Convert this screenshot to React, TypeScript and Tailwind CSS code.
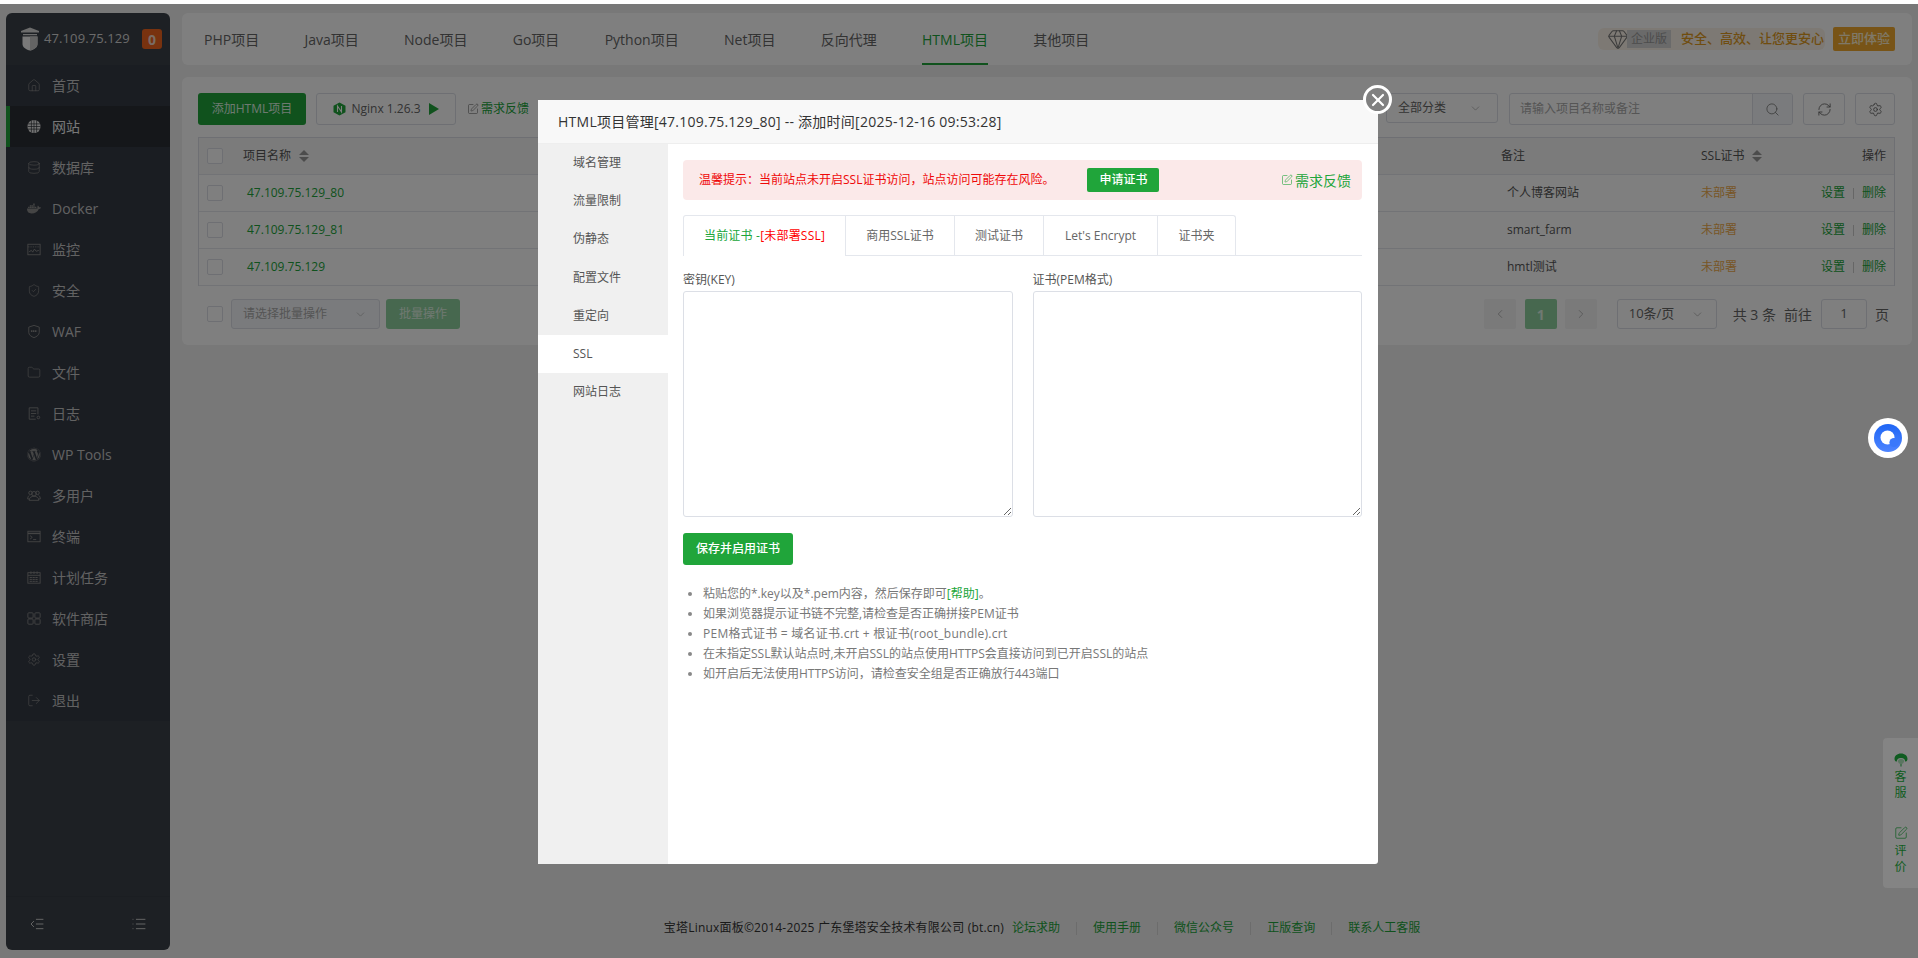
import React from "react";
import {
  House, Database, ShieldCheck, Folder, Settings, LogOut, ChevronDown, ChevronLeft, ChevronRight, Search, RefreshCw, Gem, SquarePen, IndentDecrease, List, X,
} from "lucide-react";
import { FaWordpress, FaDocker } from "react-icons/fa";

function I({ children }: { children: React.ReactNode }) {
  return (
    <svg width="15" height="15" viewBox="0 0 16 16" fill="none" stroke="currentColor" strokeWidth="1">
      {children}
    </svg>
  );
}

const navItems: [string, React.ReactNode][] = [
  ["首页", <House size={15} strokeWidth={1.2} />],
  ["网站", (
    <svg width="15" height="15" viewBox="0 0 16 16">
      <circle cx="8" cy="8" r="7.5" fill="currentColor" />
      <path d="M5 1 V15 M8 0.5 V15.5 M11 1 V15 M1 5 H15 M0.5 8 H15.5 M1 11 H15" stroke="#2a2e34" strokeWidth="0.8" />
    </svg>
  )],
  ["数据库", <Database size={15} strokeWidth={1.2} />],
  ["Docker", <FaDocker size={15} />],
  ["监控", (
    <I>
      <rect x="1" y="2" width="14" height="12" />
      <path d="M1 5 H15" strokeDasharray="1 1" />
      <path d="M2.5 10.5 L5 9 L6.5 11 L8.5 7.5 L10.5 10 L13.5 9" />
    </I>
  )],
  ["安全", <ShieldCheck size={15} strokeWidth={1.2} />],
  ["WAF", (
    <I>
      <path d="M8 1 L14 3 V9 C14 12 11 14 8 15 C5 14 2 12 2 9 V3 Z" />
      <path d="M4.5 7.5 H11.5" strokeWidth="2" strokeDasharray="1.6 0.6" />
    </I>
  )],
  ["文件", <Folder size={15} strokeWidth={1.2} />],
  ["日志", (
    <I>
      <path d="M12.5 9 V1.5 H2.5 V14.5 H10" />
      <path d="M4.5 5 H10.5 M4.5 8 H10.5 M4.5 11 H8.5" />
      <circle cx="13" cy="12.5" r="1.5" />
    </I>
  )],
  ["WP Tools", <FaWordpress size={15} />],
  ["多用户", (
    <I>
      <circle cx="8" cy="6" r="2.6" />
      <circle cx="4" cy="5" r="2" />
      <circle cx="12" cy="5" r="2" />
      <path d="M2.5 13.5 C2.5 10.5 5 8.8 8 8.8 C11 8.8 13.5 10.5 13.5 13.5 Z" />
      <path d="M2.5 8 C1.2 9 0.8 10.5 0.8 12 H2.5 M13.5 8 C14.8 9 15.2 10.5 15.2 12 H13.5" />
    </I>
  )],
  ["终端", (
    <I>
      <rect x="1" y="2" width="14" height="12" />
      <path d="M1 4.5 H15" strokeWidth="1.6" />
      <path d="M3.5 7 L6 9 L3.5 11 M7 11.5 H10.5" />
    </I>
  )],
  ["计划任务", (
    <I>
      <rect x="1" y="2.5" width="14" height="12" />
      <path d="M4.5 1 V4 M8 1 V4 M11.5 1 V4 M1 5.5 H15" />
      <path d="M3 8 H13 M3 10.2 H13 M3 12.4 H13" strokeWidth="1.1" strokeDasharray="2.6 0.7" />
    </I>
  )],
  ["软件商店", (
    <I>
      <rect x="1" y="1.5" width="6" height="6" rx="1" />
      <rect x="9" y="1.5" width="6" height="6" rx="1" />
      <rect x="1" y="8.5" width="6" height="6" rx="1" />
      <rect x="9" y="8.5" width="6" height="6" rx="1" />
    </I>
  )],
  ["设置", <Settings size={15} strokeWidth={1.2} />],
  ["退出", <LogOut size={15} strokeWidth={1.2} />],
];

const topTabs = ["PHP项目", "Java项目", "Node项目", "Go项目", "Python项目", "Net项目", "反向代理", "HTML项目", "其他项目"];
const rows = [
  ["47.109.75.129_80", "个人博客网站"],
  ["47.109.75.129_81", "smart_farm"],
  ["47.109.75.129", "hmtl测试"],
];
const modalNav = ["域名管理", "流量限制", "伪静态", "配置文件", "重定向", "SSL", "网站日志"];
const sslTabs = [
  ["商用SSL证书", "w-[109px]"],
  ["测试证书", "w-[89px]"],
  ["Let's Encrypt", "w-[114px]"],
  ["证书夹", "w-[78px]"],
];
const footerLinks = ["论坛求助", "使用手册", "微信公众号", "正版查询", "联系人工客服"];

function Check() {
  return <span className="block h-4 w-4 shrink-0 rounded-[2px] border border-[#dcdfe6] bg-white" />;
}

function Sort() {
  return (
    <span className="ml-2 flex flex-col gap-[2px]">
      <span className="h-0 w-0 border-x-[5px] border-b-[5px] border-x-transparent border-b-[#999]" />
      <span className="h-0 w-0 border-x-[5px] border-t-[5px] border-x-transparent border-t-[#999]" />
    </span>
  );
}

function Logo() {
  return (
    <svg width="20" height="24" viewBox="0 0 20 24" className="shrink-0">
      <path d="M1 4 L10 0.5 L19 4 L19 5.5 L1 5.5 Z" fill="#d9d9d9" />
      <path d="M3 7 H17 V8.2 H3 Z" fill="#d9d9d9" />
      <path d="M2.5 9.5 H17.5 V17 C17.5 20.5 13.5 22.8 10 23.5 C6.5 22.8 2.5 20.5 2.5 17 Z" fill="#f2f2f2" />
      <path d="M10 9.5 H17.5 V17 C17.5 20.5 13.5 22.8 10 23.5 Z" fill="#c9c9c9" />
    </svg>
  );
}

export default function App() {
  return (
    <div className="h-[958px] w-[1918px] overflow-hidden bg-white text-[12px] text-[#333] [font-family:'Open_Sans','Noto_Sans_CJK_SC',sans-serif]">
      <div className="h-1 bg-white" />
      <div className="relative flex h-[954px] bg-[#f0f0f0] pb-2 pl-[6px] pr-[6px] pt-[9px]">
        {/* sidebar */}
        <aside className="flex w-[164px] shrink-0 flex-col overflow-hidden rounded-[6px] bg-[#3a4048]">
          <div className="flex h-[52px] shrink-0 items-center pl-[14px] pr-2 text-[#d6d6d6]">
            <Logo />
            <span className="ml-[4px] text-[13px] tracking-[0.1px]">47.109.75.129</span>
            <span className="ml-auto flex h-5 w-5 items-center justify-center rounded-[3px] bg-[#f0641e] text-[14px] font-bold text-[#f5d8c8]">0</span>
          </div>
          <nav className="flex flex-col bg-[#343a44]">
            {navItems.map(([label, icon], i) => (
              <div
                key={label}
                className={`flex h-[41px] items-center border-l-4 pl-[17px] text-[14px] ${
                  i === 1 ? "border-[#20a53a] bg-[#2a2e34] text-[#eeeeee]" : "border-transparent text-[#c4c4c4]"
                }`}
              >
                <span className={`flex w-[14px] justify-center ${i === 1 ? "text-[#e6e6e6]" : "text-[#8a8a8a]"}`}>{icon}</span>
                <span className="ml-[11px]">{label}</span>
              </div>
            ))}
          </nav>
          <div className="flex-1" />
          <div className="flex h-[54px] shrink-0 items-center justify-between border-t border-[#363c44] pl-[23px] pr-[23px] text-[#c8c8c8]">
            <IndentDecrease size={16} strokeWidth={1.5} />
            <List size={16} strokeWidth={1.5} />
          </div>
        </aside>

        {/* main column */}
        <main className="ml-3 flex min-w-0 flex-1 flex-col">
          <div className="flex h-[52px] shrink-0 items-center rounded-[6px] bg-white pl-[22px] pr-[16px] text-[14px] text-[#666]">
            {topTabs.map((t, i) => (
              <div
                key={t}
                className={`mr-[45.3px] flex h-full items-center border-b-2 pt-[2px] ${
                  i === 7 ? "border-[#20a53a] text-[#20a53a]" : "border-transparent"
                }`}
              >
                {t}
              </div>
            ))}
            <div className="ml-auto flex h-[22px] w-[227px] items-center rounded-[6px] bg-[#fbf3e8] pl-[9px]">
              <Gem size={22} strokeWidth={1.1} className="shrink-0 text-[#777]" />
              <span className="-ml-[2px] flex h-[18px] w-[44px] items-center justify-center bg-[#d4d4d4] text-[12px] text-[#999]">企业版</span>
              <span className="ml-[10px] text-[13px] font-medium text-[#e09a1f]">安全、高效、让您更安心</span>
            </div>
            <span className="ml-2 mr-[1px] flex h-6 w-[62px] items-center justify-center rounded-[2px] bg-[#f0a92e] text-[13px] font-medium text-[#fff1d0]">立即体验</span>
          </div>

          <section className="mt-3 h-[268px] shrink-0 rounded-[6px] bg-white pl-4 pr-[17px] pt-4">
            <div className="flex h-8 items-start">
              <span className="flex h-8 w-[108px] items-center justify-center rounded-[3px] bg-[#20a53a] text-[12px] text-[#dff3e3]">添加HTML项目</span>
              <span className="ml-[10px] flex h-8 w-[140px] items-center justify-center rounded-[3px] border border-[#dcdfe6] text-[12px] text-[#666]">
                <svg width="13" height="14" viewBox="0 0 13 14" className="mr-[5px]">
                  <path d="M6.5 0.5 L12.5 3.7 V10.3 L6.5 13.5 L0.5 10.3 V3.7 Z" fill="#20a53a" />
                  <path d="M4.5 10 V4 L8.5 10 V4" stroke="#fff" strokeWidth="1.1" fill="none" />
                </svg>
                Nginx 1.26.3
                <span className="ml-2 h-0 w-0 border-y-[6px] border-l-[10px] border-y-transparent border-l-[#20a53a]" />
              </span>
              <span className="ml-[11px] flex h-8 items-center text-[12px] text-[#20a53a]">
                <SquarePen size={12} strokeWidth={1.2} className="mr-[2px] text-[#666]" />
                需求反馈
              </span>
              <span className="ml-auto flex h-[30px] w-[112px] items-center justify-between rounded-[3px] border border-[#dcdfe6] pl-[11px] pr-[15px] text-[12px] text-[#666]">
                全部分类 <ChevronDown size={13} strokeWidth={1.2} className="text-[#999]" />
              </span>
              <span className="ml-[11px] flex h-8 w-[284px] items-stretch overflow-hidden rounded-[3px] border border-[#dcdfe6] text-[12px] text-[#aaa]">
                <span className="flex flex-1 items-center pl-[10px]">请输入项目名称或备注</span>
                <span className="flex w-[40px] items-center justify-center border-l border-[#dcdfe6] bg-[#f5f7fa] text-[#777]">
                  <Search size={15} strokeWidth={1.3} />
                </span>
              </span>
              <span className="ml-[10px] flex h-8 w-[42px] items-center justify-center rounded-[3px] border border-[#dcdfe6] text-[#666]">
                <RefreshCw size={15} strokeWidth={1.4} />
              </span>
              <span className="ml-[10px] flex h-8 w-[40px] items-center justify-center rounded-[3px] border border-[#dcdfe6] text-[#666]">
                <Settings size={15} strokeWidth={1.4} />
              </span>
            </div>

            <div className="mt-3 border-x border-t border-[#dcdfe6] text-[12px]">
              <div className="flex h-[37px] items-center border-b border-[#e4e7ed] bg-[#f7f7f7] text-[#555]">
                <span className="ml-2"><Check /></span>
                <span className="ml-5 flex w-[1258px] items-center">项目名称<Sort /></span>
                <span className="w-[200px]">备注</span>
                <span className="flex items-center">SSL证书<Sort /></span>
                <span className="ml-auto mr-2">操作</span>
              </div>
              {rows.map(([name, note]) => (
                <div key={name} className="flex h-[37px] items-center border-b border-[#e4e7ed] text-[#555]">
                  <span className="ml-2"><Check /></span>
                  <span className="ml-6 w-[1254px] text-[#20a53a]">{name}</span>
                  <span className="ml-[6px] w-[194px]">{note}</span>
                  <span className="text-[#f0ad4e]">未部署</span>
                  <span className="ml-auto mr-2 flex items-center text-[#20a53a]">
                    设置<span className="mx-2 h-[11px] w-px bg-[#ccc]" />删除
                  </span>
                </div>
              ))}
            </div>

            <div className="mt-[13px] flex h-[30px] items-center text-[12px] text-[#666]">
              <span className="ml-[9px]"><Check /></span>
              <span className="ml-2 flex h-[30px] w-[149px] items-center justify-between rounded-[3px] border border-[#dcdfe6] bg-[#f5f7fa] pl-[11px] pr-[12px] text-[#aaa]">
                请选择批量操作 <ChevronDown size={13} strokeWidth={1.2} />
              </span>
              <span className="ml-[6px] flex h-[30px] w-[74px] items-center justify-center rounded-[3px] bg-[#8fd19e] text-[#e0f2e4]">批量操作</span>
              <span className="ml-auto flex h-[30px] w-8 items-center justify-center rounded-[2px] bg-[#f4f4f5] text-[#aaa]"><ChevronLeft size={14} strokeWidth={1.4} /></span>
              <span className="ml-[9px] flex h-[30px] w-8 items-center justify-center rounded-[2px] bg-[#8fd19e] text-[14px] font-bold text-[#e0f2e4]">1</span>
              <span className="ml-2 flex h-[30px] w-8 items-center justify-center rounded-[2px] bg-[#f4f4f5] text-[#aaa]"><ChevronRight size={14} strokeWidth={1.4} /></span>
              <span className="ml-5 flex h-[30px] w-[100px] items-center justify-between rounded-[3px] border border-[#dcdfe6] pl-[11px] pr-[12px] text-[13px]">
                10条/页 <ChevronDown size={13} strokeWidth={1.2} className="text-[#999]" />
              </span>
              <span className="ml-4 text-[14px]">共 3 条</span>
              <span className="ml-[8px] text-[14px]">前往</span>
              <span className="ml-[9px] flex h-[30px] w-[46px] items-center justify-center rounded-[3px] border border-[#dcdfe6] text-[13px]">1</span>
              <span className="ml-2 mr-[6px] text-[14px]">页</span>
            </div>
          </section>

          <footer className="mt-auto flex h-[44px] items-center justify-center pr-[10px] text-[12px] text-[#333]">
            <span className="tracking-[0.2px]">宝塔Linux面板©2014-2025 广东堡塔安全技术有限公司 (bt.cn)</span>
            {footerLinks.map((l, i) => (
              <span key={l} className={`flex items-center text-[#20a53a] ${i === 0 ? "ml-2" : ""}`}>
                {i > 0 && <span className="mx-4 h-[13px] w-px bg-[#d8d8d8]" />}
                {l}
              </span>
            ))}
          </footer>
        </main>

        {/* dim layer */}
        <div className="absolute inset-0 bg-black/50" />

        {/* right side widgets */}
        <div className="absolute left-[1868px] top-[414px] flex h-10 w-10 items-center justify-center rounded-full bg-white">
          <svg width="28" height="28" viewBox="0 0 28 28">
            <defs>
              <linearGradient id="chatBlue" x1="0" y1="0" x2="0" y2="1">
                <stop offset="0" stopColor="#1f66f5" />
                <stop offset="1" stopColor="#4d84ff" />
              </linearGradient>
            </defs>
            <circle cx="14" cy="14" r="14" fill="url(#chatBlue)" />
            <circle cx="13.5" cy="13.5" r="7" fill="#ffffff" />
            <circle cx="20" cy="18.5" r="4.6" fill="#3a78fb" />
          </svg>
        </div>
        <div className="absolute left-[1883px] top-[734px] flex h-[150px] w-[35px] flex-col items-center rounded-l-[4px] bg-[#848484] pt-[15px] text-[12px] leading-[16px] text-[#0f5c20]">
          <svg width="14" height="14" viewBox="0 0 14 14">
            <path d="M7 0.5 C3.2 0.5 0.5 2.8 0.5 6 C0.5 7.6 1.6 8.6 2.8 8.6 C2.8 6.5 4 5 7 5 C10 5 11.2 6.5 11.2 8.6 C12.4 8.6 13.5 7.6 13.5 6 C13.5 2.8 10.8 0.5 7 0.5 Z" fill="#0f5c20" />
            <path d="M3.8 8 C4.5 10.5 5.5 11 7 11 C8.5 11 9.5 10.5 10.2 8 C9.6 6.5 8.5 6 7 6 C5.5 6 4.4 6.5 3.8 8 Z" fill="#0f5c20" opacity="0.35" />
            <path d="M7 11 V13.5" stroke="#0f5c20" strokeWidth="1" />
          </svg>
          <span className="mt-[2px] w-3 text-center">客服</span>
          <SquarePen size={14} strokeWidth={1.2} className="mt-[25px]" />
          <span className="mt-[3px] w-3 text-center">评价</span>
        </div>

        {/* modal */}
        <div className="absolute left-[538px] top-[96px] flex h-[764px] w-[840px] flex-col rounded-[3px] bg-white">
          <div className="flex h-[44px] shrink-0 items-center border-b border-[#eee] bg-[#f8f8f8] pl-[20px] text-[14px] tracking-[0.25px] text-[#333]">
            HTML项目管理[47.109.75.129_80] -- 添加时间[2025-12-16 09:53:28]
          </div>
          <div className="flex min-h-0 flex-1">
            <div className="w-[130px] shrink-0 bg-[#f0f0f0] text-[12px] text-[#555]">
              {modalNav.map((m) => (
                <div key={m} className={`flex h-[38.2px] items-center pl-[35px] ${m === "SSL" ? "bg-white" : ""}`}>{m}</div>
              ))}
            </div>
            <div className="flex-1 pl-[15px] pr-[16px] pt-4">
              <div className="flex h-10 items-center rounded-[4px] bg-[#fbe9e9] pl-4 pr-[11px] text-[12px] text-[#ef0808]">
                温馨提示：当前站点未开启SSL证书访问，站点访问可能存在风险。
                <span className="ml-[33px] flex h-6 w-[72px] items-center justify-center rounded-[2px] bg-[#20a53a] text-[12px] font-medium text-white">申请证书</span>
                <span className="ml-auto flex items-center text-[14px] text-[#20a53a]">
                  <SquarePen size={12} strokeWidth={1.2} className="mr-[2px]" />
                  需求反馈
                </span>
              </div>
              <div className="mt-[15px] flex h-[41px] border-b border-[#e4e7ed] text-[12px] text-[#666]">
                <span className="-mb-px flex h-[41px] w-[163px] items-center justify-center rounded-tl-[3px] border-x border-t border-[#e4e7ed] bg-white tracking-[0.2px] text-[#20a53a]">
                  当前证书 -<span className="text-[#ff0000]">[未部署SSL]</span>
                </span>
                {sslTabs.map(([t, w], i) => (
                  <span key={t} className={`flex h-10 items-center justify-center border-r border-t border-[#e4e7ed] ${w} ${i === 3 ? "rounded-tr-[3px]" : ""}`}>{t}</span>
                ))}
              </div>
              <div className="mt-[14px] grid grid-cols-2 gap-x-5 text-[12px] text-[#555]">
                <div>
                  <div className="h-5 leading-[20px]">密钥(KEY)</div>
                  <textarea readOnly className="mt-[1px] block h-[226px] w-full rounded-[3px] border border-[#dcdfe6]" />
                </div>
                <div>
                  <div className="h-5 leading-[20px]">证书(PEM格式)</div>
                  <textarea readOnly className="mt-[1px] block h-[226px] w-full rounded-[3px] border border-[#dcdfe6]" />
                </div>
              </div>
              <span className="mt-4 flex h-8 w-[110px] items-center justify-center rounded-[3px] bg-[#20a53a] text-[12px] font-medium text-white">保存并启用证书</span>
              <ul className="mt-[19px] list-disc pl-[20px] text-[12px] leading-[20px] text-[#777] marker:text-[#888]">
                <li>粘贴您的*.key以及*.pem内容，然后保存即可<span className="text-[#20a53a]">[帮助]</span>。</li>
                <li>如果浏览器提示证书链不完整,请检查是否正确拼接PEM证书</li>
                <li className="tracking-[0.25px]">PEM格式证书 = 域名证书.crt + 根证书(root_bundle).crt</li>
                <li>在未指定SSL默认站点时,未开启SSL的站点使用HTTPS会直接访问到已开启SSL的站点</li>
                <li>如开启后无法使用HTTPS访问，请检查安全组是否正确放行443端口</li>
              </ul>
            </div>
          </div>
          <div className="absolute -right-[14px] -top-[15px] flex h-[29px] w-[29px] items-center justify-center rounded-full border-[3px] border-white bg-[#808080] text-white">
            <X size={20} strokeWidth={2.6} />
          </div>
        </div>
      </div>
    </div>
  );
}
